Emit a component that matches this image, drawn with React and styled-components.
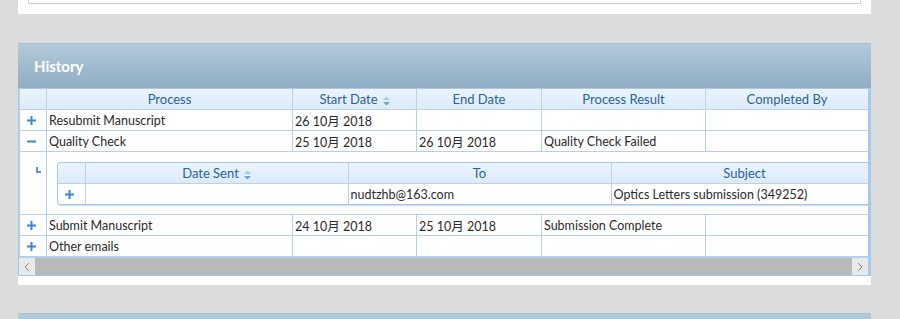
import React from 'react'
import styled, { createGlobalStyle } from 'styled-components'

const GlobalStyle = createGlobalStyle`
  body {
    margin: 0;
    background: #dcdcdc;
    font-family: "Lato", "Noto Sans CJK SC", sans-serif;
  }
`
const Page = styled.div`
  width: 853px;
  padding-left: 18px;
  height: 319px;
  overflow: hidden;
`
const TopPanel = styled.div`
  background: #ffffff;
  height: 14px;
  padding: 0 10px;
  box-sizing: border-box;
`
const TopBox = styled.div`
  height: 4px;
  border: 1px solid #cfcfcf;
  border-top: none;
  box-sizing: border-box;
`
const Panel = styled.div`
  margin-top: 29px;
  background: #ffffff;
  padding-bottom: 9px;
`
const PanelHeader = styled.div`
  height: 45px;
  display: flex;
  align-items: center;
  padding-left: 16px;
  background: linear-gradient(#b3cada, #8fadc4);
  color: #ffffff;
  font-weight: 700;
  font-size: 15px;
  border-top: 1px solid #a6c0d3;
  box-sizing: border-box;
`
const NextPanel = styled(PanelHeader)`
  margin-top: 28px;
`
const Grid = styled.div`
  border: 1px solid #a7c9e6;
  border-right-width: 3px;
  overflow: hidden;
`
const Table = styled.table`
  border-collapse: collapse;
  table-layout: fixed;
  width: ${p => p.$width}px;
  font-size: 12.5px;
  color: #2a2a2a;
`
const Th = styled.th`
  height: 20px;
  padding: 0 6px;
  font-weight: 400;
  font-size: 13px;
  color: #2862a0;
  text-align: center;
  background: linear-gradient(#eaf4fd, #dcebf9);
  border: 1px solid #b7d4ec;
  border-top: none;
  white-space: nowrap;
`
const Td = styled.td`
  height: 20px;
  padding: 0 2px;
  border: 1px solid #b3d1ea;
  white-space: nowrap;
  overflow: hidden;
  vertical-align: ${p => (p.$top ? 'top' : 'middle')};
`
const DetailCell = styled.td`
  border: 1px solid #b3d1ea;
  padding: 10px 0 9px 10px;
`
const DetailGrid = styled.div`
  border: 1px solid #a7c9e6;
  border-right: none;
  border-radius: 4px 0 0 4px;
  overflow: hidden;
  box-shadow: 0 1px 1px rgba(120, 160, 200, 0.4);
  width: 820px;
`
const Toggle = styled.svg`
  display: block;
  margin-left: 5px;
`
const Corner = styled.span`
  display: block;
  width: 3px;
  height: 4px;
  margin: 15px 0 0 14px;
  border-left: 2px solid #5b9bd3;
  border-bottom: 2px solid #5b9bd3;
`
const Sort = styled.svg`
  margin-left: 5px;
  vertical-align: middle;
`
const ScrollBar = styled.div`
  display: flex;
  height: 17px;
  background: #b9b9b9;
  border-top: 1px solid #b3d1ea;
`
const ScrollBtn = styled.div`
  width: 16px;
  background: #e9e9e9;
  display: flex;
  align-items: center;
  justify-content: center;
  margin-left: ${p => (p.$end ? 'auto' : '0')};
`

const PlusMinus = ({ minus }) => (
  <Toggle width="9" height="9" viewBox="0 0 9 9">
    <rect x="0" y="3.5" width="9" height="2" fill="#3b87c9" />
    {!minus && <rect x="3.5" y="0" width="2" height="9" fill="#3b87c9" />}
  </Toggle>
)

const SortIcon = () => (
  <Sort width="7" height="10" viewBox="0 0 7 10">
    <path d="M0 4 L3.5 0.5 L7 4 Z" fill="#a8c8e6" />
    <path d="M0 6 L3.5 9.5 L7 6 Z" fill="#6aa0d4" />
  </Sort>
)

const Chevron = ({ dir }) => (
  <svg width="6" height="10" viewBox="0 0 6 10">
    <path d={dir === 'left' ? 'M5 1 L1 5 L5 9' : 'M1 1 L5 5 L1 9'} stroke="#888" fill="none" strokeWidth="1" />
  </svg>
)

const rowsTop = [
  { minus: false, process: 'Resubmit Manuscript', start: '26 10月 2018', end: '', result: '', by: '' },
  { minus: true, process: 'Quality Check', start: '25 10月 2018', end: '26 10月 2018', result: 'Quality Check Failed', by: '' },
]
const rowsBottom = [
  { minus: false, process: 'Submit Manuscript', start: '24 10月 2018', end: '25 10月 2018', result: 'Submission Complete', by: '' },
  { minus: false, process: 'Other emails', start: '', end: '', result: '', by: '' },
]

function Row({ r }) {
  return (
    <tr>
      <Td><PlusMinus minus={r.minus} /></Td>
      <Td>{r.process}</Td>
      <Td>{r.start}</Td>
      <Td>{r.end}</Td>
      <Td>{r.result}</Td>
      <Td>{r.by}</Td>
    </tr>
  )
}

export default function App() {
  return (
    <Page>
      <GlobalStyle />
      <TopPanel>
        <TopBox />
      </TopPanel>
      <Panel>
        <PanelHeader>History</PanelHeader>
        <Grid>
          <Table $width={849}>
            <colgroup>
              <col style={{ width: 27 }} />
              <col style={{ width: 246 }} />
              <col style={{ width: 124 }} />
              <col style={{ width: 125 }} />
              <col style={{ width: 164 }} />
              <col style={{ width: 163 }} />
            </colgroup>
            <thead>
              <tr>
                <Th />
                <Th>Process</Th>
                <Th>Start Date<SortIcon /></Th>
                <Th>End Date</Th>
                <Th>Process Result</Th>
                <Th>Completed By</Th>
              </tr>
            </thead>
            <tbody>
              {rowsTop.map(r => <Row key={r.process} r={r} />)}
              <tr>
                <Td $top>
                  <Corner />
                </Td>
                <DetailCell colSpan={5}>
                  <DetailGrid>
                    <Table $width={820}>
                      <colgroup>
                        <col style={{ width: 27 }} />
                        <col style={{ width: 263 }} />
                        <col style={{ width: 263 }} />
                        <col style={{ width: 267 }} />
                      </colgroup>
                      <thead>
                        <tr>
                          <Th style={{ borderLeft: 'none' }} />
                          <Th>Date Sent<SortIcon /></Th>
                          <Th>To</Th>
                          <Th>Subject</Th>
                        </tr>
                      </thead>
                      <tbody>
                        <tr>
                          <Td style={{ borderLeft: 'none', borderBottom: 'none' }}><PlusMinus /></Td>
                          <Td style={{ borderBottom: 'none' }}></Td>
                          <Td style={{ borderBottom: 'none' }}>nudtzhb@163.com</Td>
                          <Td style={{ borderBottom: 'none' }}>Optics Letters submission (349252)</Td>
                        </tr>
                      </tbody>
                    </Table>
                  </DetailGrid>
                </DetailCell>
              </tr>
              {rowsBottom.map(r => <Row key={r.process} r={r} />)}
            </tbody>
          </Table>
          <ScrollBar>
            <ScrollBtn><Chevron dir="left" /></ScrollBtn>
            <ScrollBtn $end><Chevron dir="right" /></ScrollBtn>
          </ScrollBar>
        </Grid>
      </Panel>
      <NextPanel />
    </Page>
  )
}
